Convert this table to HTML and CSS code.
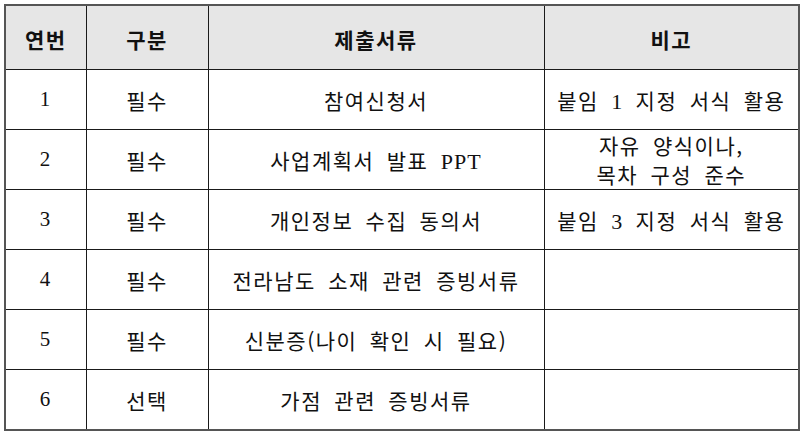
FILE: index.html
```html
<!DOCTYPE html>
<html lang="ko">
<head>
<meta charset="utf-8">
<link rel="stylesheet" href="styles.css">
</head>
<body>
<table class="docs">
  <colgroup>
    <col class="c-no">
    <col class="c-type">
    <col class="c-doc">
    <col class="c-note">
  </colgroup>
  <thead>
    <tr class="head">
      <th>연번</th>
      <th>구분</th>
      <th>제출서류</th>
      <th>비고</th>
    </tr>
  </thead>
  <tbody>
    <tr>
      <td class="num">1</td>
      <td>필수</td>
      <td>참여신청서</td>
      <td>붙임 <span class="num">1</span> 지정 서식 활용</td>
    </tr>
    <tr>
      <td class="num">2</td>
      <td>필수</td>
      <td>사업계획서 발표 <span class="num">PPT</span></td>
      <td class="two">자유 양식이나,<br>목차 구성 준수</td>
    </tr>
    <tr>
      <td class="num">3</td>
      <td>필수</td>
      <td>개인정보 수집 동의서</td>
      <td>붙임 <span class="num">3</span> 지정 서식 활용</td>
    </tr>
    <tr>
      <td class="num">4</td>
      <td>필수</td>
      <td>전라남도 소재 관련 증빙서류</td>
      <td></td>
    </tr>
    <tr>
      <td class="num">5</td>
      <td>필수</td>
      <td>신분증(나이 확인 시 필요)</td>
      <td></td>
    </tr>
    <tr>
      <td class="num">6</td>
      <td>선택</td>
      <td>가점 관련 증빙서류</td>
      <td></td>
    </tr>
  </tbody>
</table>
</body>
</html>
```

FILE: styles.css
```css
html, body {
  margin: 0;
  padding: 0;
  background: #ffffff;
}

body {
  padding: 4px 0 0 4px;
  font-family: "Noto Sans CJK KR", "Liberation Serif", sans-serif;
  color: #111;
}

.docs {
  border-collapse: collapse;
  width: 794px;
  table-layout: fixed;
  border: 2px solid #555;
}

.c-no { width: 81px; }
.c-type { width: 122px; }
.c-doc { width: 336px; }
.c-note { width: 255px; }

.docs th,
.docs td {
  border: 1px solid #1a1a1a;
  padding: 0;
  text-align: center;
  vertical-align: middle;
  font-size: 21px;
  word-spacing: 5px;
  letter-spacing: 1.5px;
  white-space: nowrap;
}

.docs th {
  background: #e6e6e6;
  font-weight: bold;
  height: 61px;
  padding-top: 2px;
}

.docs td {
  height: 59px;
  font-weight: normal;
}

.docs td.two {
  line-height: 29px;
}

.num {
  font-family: "Liberation Serif", serif;
  font-size: 22px;
  letter-spacing: 1px;
}
```
